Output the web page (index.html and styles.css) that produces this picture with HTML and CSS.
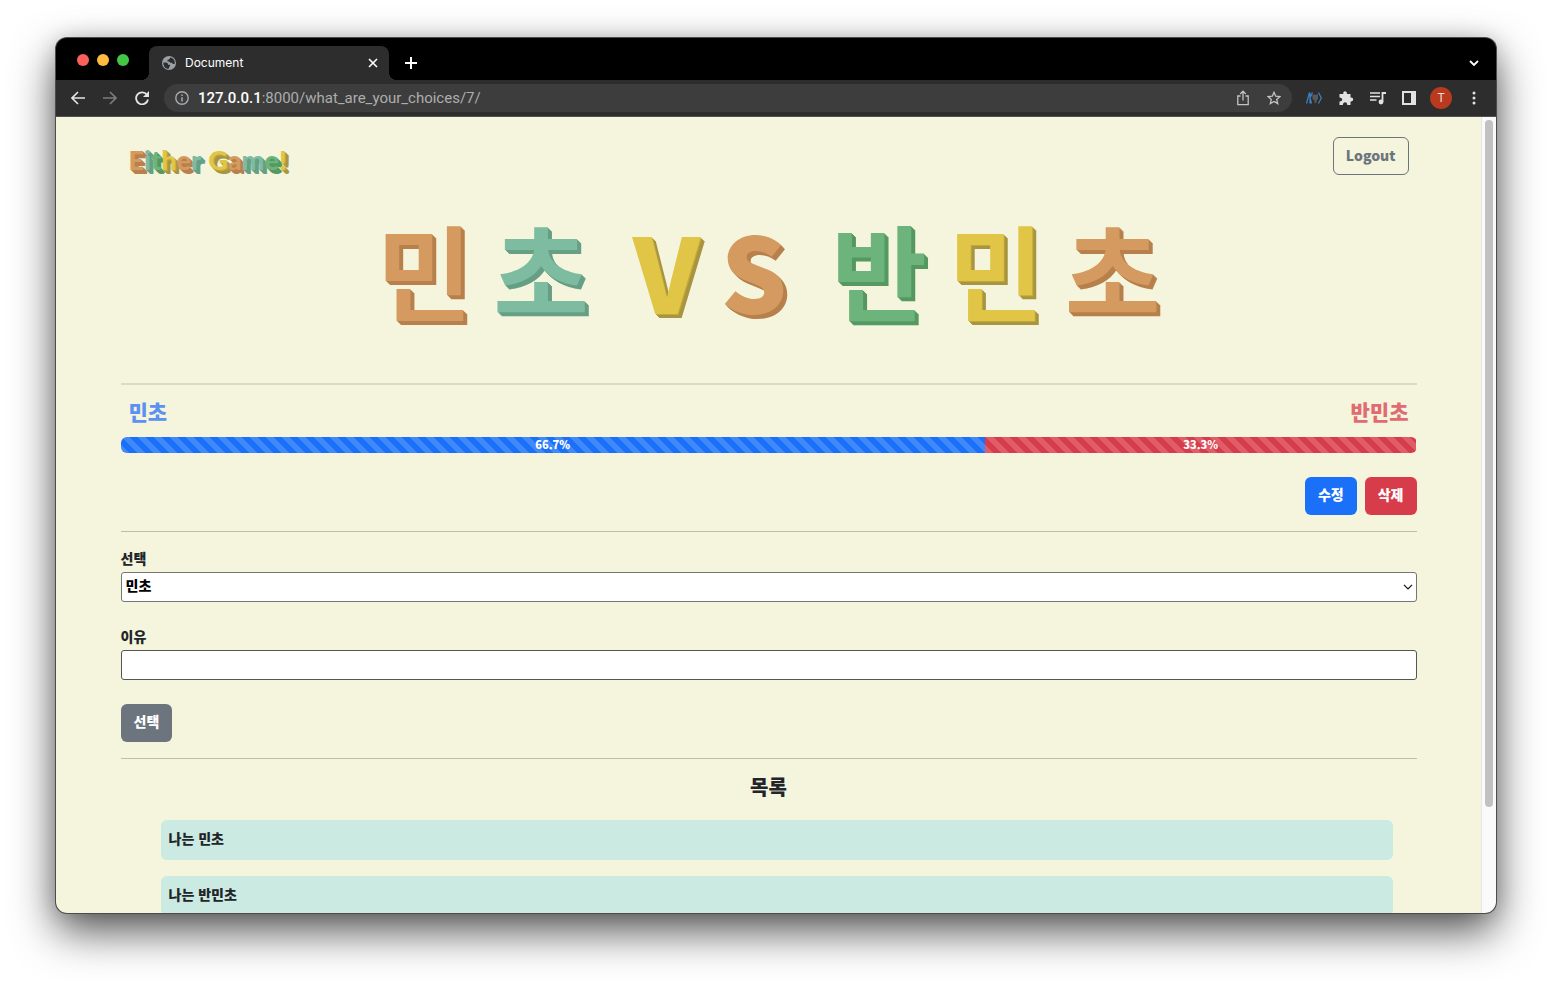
FILE: index.html
```html
<!DOCTYPE html>
<html lang="ko">
<head>
<meta charset="utf-8">
<title>Document</title>
<link rel="stylesheet" href="styles.css">
</head>
<body>
<div class="window">
  <header class="tabs">
    <div class="lights"><i class="red"></i><i class="amber"></i><i class="green"></i></div>
    <div class="tab">
      <svg class="globe" width="14" height="14" viewBox="0 0 14 14"><circle cx="7" cy="7" r="7" fill="#9aa0a6"/><path d="M1.4 6.400h3.200l1.400 1.300v1h2v1.600l-.9.8v1.500C3.700 13.200 1.100 10 1.400 6.400zM8.300 1.500C8.200 2.900 7 2.700 6.700 3.800H5.500v1.700h1.700l.8 1.200h2l.8 1.200h1.800c.7-3-1.100-5.800-4.300-6.400z" fill="#2d2d2d"/></svg>
      <span class="tab-title">Document</span>
      <button class="plain" aria-label="Close tab"><svg width="10" height="10" viewBox="0 0 10 10"><path d="M1 1l8 8M9 1L1 9" stroke="#fff" stroke-width="1.600"/></svg></button>
    </div>
    <button class="plain new" aria-label="New tab"><svg width="12" height="12" viewBox="0 0 12 12"><path d="M6 0v12M0 6h12" stroke="#fff" stroke-width="2"/></svg></button>
    <button class="plain more" aria-label="Search tabs"><svg width="10" height="8" viewBox="0 0 10 8"><path d="M1 2l4 4 4-4" fill="none" stroke="#fff" stroke-width="1.800"/></svg></button>
  </header>
  <div class="toolbar">
    <nav class="history">
      <button class="plain" aria-label="Back"><svg width="14" height="14" viewBox="0 0 14 14"><path d="M14 7H1.500M7 1L1 7l6 6" fill="none" stroke="#e4e4e4" stroke-width="1.600"/></svg></button>
      <button class="plain" aria-label="Forward"><svg width="14" height="14" viewBox="0 0 14 14"><path d="M0 7h12.500M7 1l6 6-6 6" fill="none" stroke="#7c7c7c" stroke-width="1.600"/></svg></button>
      <button class="plain" aria-label="Reload"><svg width="14" height="14" viewBox="0 0 14 14"><path d="M12 3.800A6 6 0 1 0 13 8.500" fill="none" stroke="#e4e4e4" stroke-width="1.800"/><path d="M14 0v6H8z" fill="#e4e4e4"/></svg></button>
    </nav>
    <div class="address">
      <svg width="14" height="14" viewBox="0 0 14 14"><circle cx="7" cy="7" r="6.200" fill="none" stroke="#a8acb0" stroke-width="1.400"/><path d="M7 6.200v4.200M7 3.500v1.500" stroke="#a8acb0" stroke-width="1.500"/></svg>
      <span class="url"><b>127.0.0.1</b>:8000/what_are_your_choices/7/</span>
      <button class="plain" aria-label="Share"><svg width="12" height="16" viewBox="0 0 12 16"><path d="M3.500 6H.8v8.700h10.400V6H8.500M6 10.500V1.500M3.200 4L6 1.200 8.800 4" fill="none" stroke="#c3c3c3" stroke-width="1.300"/></svg></button>
      <button class="plain" aria-label="Bookmark"><svg width="14" height="14" viewBox="0 0 14 14"><path d="M7 1.300l1.700 3.900 4.200.4-3.200 2.800 1 4.200L7 10.400l-3.700 2.200 1-4.200L1.100 5.600l4.200-.4z" fill="none" stroke="#c3c3c3" stroke-width="1.300"/></svg></button>
    </div>
    <div class="extensions">
      <svg width="16" height="12" viewBox="0 0 16 12"><path d="M3.500.5l-3 11M6.500.5L4 6l1.500 5.500M4 .5v11M12.500.5L15.300 6l-2.800 5.500" fill="none" stroke="#3c82c4" stroke-width="1.200"/><path d="M6.500 2l1.500.8h2.500L12 2v5l-1.500 1.500V11h-2V8.500L6.500 7z" fill="#5a5a5a"/></svg>
      <svg width="16" height="16" viewBox="0 0 16 16"><path d="M1.500 4h3.800C4.600.4 9.400.4 8.900 4h3.600v3.600c3.600-.5 3.600 4.300 0 3.800v3.600H9.200c.3-3.700-4.500-3.700-4.300 0H1.500v-3.500c3.600 0 3.600-4 0-4z" fill="#e2e2e2"/></svg>
      <svg width="16" height="14" viewBox="0 0 16 14"><path d="M0 2h10M0 5.500h10M0 9h6.500" stroke="#e2e2e2" stroke-width="1.700"/><path d="M12.500 11V2H16" fill="none" stroke="#e2e2e2" stroke-width="1.800"/><circle cx="11" cy="11" r="2.400" fill="#e2e2e2"/></svg>
      <svg width="14" height="14" viewBox="0 0 14 14"><path d="M0 0h14v14H0zM2 2v10h7V2z" fill="#e2e2e2" fill-rule="evenodd"/></svg>
      <span class="avatar">T</span>
      <svg width="4" height="14" viewBox="0 0 4 14"><circle cx="2" cy="2" r="1.500" fill="#e2e2e2"/><circle cx="2" cy="7" r="1.500" fill="#e2e2e2"/><circle cx="2" cy="12" r="1.500" fill="#e2e2e2"/></svg>
    </div>
  </div>
  <div class="viewport">
    <main class="page">
      <div class="container">
        <nav class="navbar">
          <a class="logo" href="#" aria-label="Either Game!"><span class="orange">E</span><span class="mint">i</span><span class="leaf">t</span><span class="gold">h</span><span class="orange">e</span><span class="mint">r</span><span class="gold word">G</span><span class="orange">a</span><span class="mint">m</span><span class="leaf">e</span><span class="gold">!</span></a>
          <button class="btn outline">Logout</button>
        </nav>
        <h1 class="title"><span class="orange">민</span><span class="mint">초</span><span class="gold latin word">V</span><span class="orange latin">S</span><span class="leaf word">반</span><span class="gold">민</span><span class="orange">초</span></h1>
        <hr class="thick">
        <div class="sides"><span class="side-a">민초</span><span class="side-b">반민초</span></div>
        <div class="progress"><div class="bar blue" style="width:66.7%">66.7%</div><div class="bar crimson" style="width:33.3%">33.3%</div></div>
        <div class="actions"><button class="btn blue">수정</button><button class="btn crimson">삭제</button></div>
        <hr>
        <form class="form">
          <label for="choice">선택</label>
          <div class="select-wrap">
            <select id="choice"><option>민초</option><option>반민초</option></select>
            <svg class="caret" width="10" height="6" viewBox="0 0 10 6"><path d="M1 .8l4 4 4-4" fill="none" stroke="#111" stroke-width="1.200"/></svg>
          </div>
          <label for="reason">이유</label>
          <input id="reason" type="text">
          <button class="btn gray" type="button">선택</button>
        </form>
        <hr>
        <h2>목록</h2>
        <ul class="list"><li>나는 민초</li><li>나는 반민초</li></ul>
      </div>
    </main>
    <div class="scrollbar"><div class="thumb"></div></div>
  </div>
</div>
</body>
</html>
```
FILE: styles.css
```css
* { box-sizing: border-box; }
body {
  margin: 0;
  height: 100vh;
  padding: 38px 56px 74px;
  background: #fff;
  overflow: hidden;
  font-family: "Noto Sans CJK KR", sans-serif;
  font-weight: 900;
  font-size: 14px;
  line-height: 24px;
  color: #212529;
}
button, input, select { font: inherit; }
svg { display: block; flex: none; }
.plain { border: 0; padding: 0; background: none; }

.window {
  height: 100%;
  display: flex;
  flex-direction: column;
  border-radius: 11px;
  overflow: hidden;
  background: #000;
  box-shadow: 0 0 0 1px #4c4c4c, 0 18px 44px rgba(0, 0, 0, .68), 0 0 20px rgba(0, 0, 0, .15);
}
.tabs {
  display: flex;
  height: 42px;
  padding-right: 17px;
  font: 12px/16px Inter, sans-serif;
  color: #fff;
}
.lights { display: flex; gap: 8px; width: 93px; padding: 16px 0 0 21px; }
.lights i { width: 12px; height: 12px; border-radius: 50%; }
.red { background: #fc605b; }
.amber { background: #fdbc40; }
.green { background: #43c645; }
.tab {
  position: relative;
  display: flex;
  align-items: center;
  gap: 9px;
  width: 240px;
  margin-top: 8px;
  padding: 0 11px 0 13px;
  border-radius: 8px 8px 0 0;
  background: #2d2d2d;
}
.tab::before, .tab::after {
  content: "";
  position: absolute;
  bottom: 0;
  width: 8px;
  height: 8px;
}
.tab::before { right: 100%; background: radial-gradient(circle at 0 0, #000 8px, #2d2d2d 8px); }
.tab::after { left: 100%; background: radial-gradient(circle at 100% 0, #000 8px, #2d2d2d 8px); }
.tab-title { flex: 1; }
.new { margin: 8px 0 0 16px; }
.more { margin: 8px 0 0 auto; }
.toolbar {
  display: flex;
  align-items: center;
  height: 37px;
  padding: 0 20px 0 15px;
  background: #2d2d2d;
  border-bottom: 1px solid #505050;
}
.history { display: flex; gap: 18px; width: 93px; }
.address {
  flex: 1;
  display: flex;
  align-items: center;
  gap: 18px;
  height: 28px;
  padding: 0 11px;
  border-radius: 14px;
  background: #3d3d3d;
  font: 15px/20px Roboto, sans-serif;
  color: #adadad;
}
.url { flex: 1; margin-left: -9px; }
.url b { font-weight: 500; color: #fff; }
.extensions { display: flex; align-items: center; gap: 16px; padding-left: 14px; }
.avatar {
  width: 22px;
  height: 22px;
  margin: 0 4px 0 -2px;
  border-radius: 50%;
  background: #b93a1e;
  color: #f3dcd6;
  font: 12px/22px Inter, sans-serif;
  text-align: center;
}

.viewport { flex: 1; min-height: 0; display: flex; }
.page { flex: 1; overflow: hidden; background: #f5f4dc; }
.scrollbar { width: 15px; padding: 3px; background: #fafafa; border-left: 1px solid #e6e6e6; }
.thumb { width: 8px; height: 87%; border-radius: 4px; background: #c1c1c1; }
.container { max-width: 1320px; margin: 0 auto; padding: 0 12px; }
.navbar { display: flex; justify-content: space-between; align-items: flex-start; padding: 20px 8px; }

.orange { --face: #d59a5f; --side: #b7804c; --edge: #b7804c; }
.mint { --face: #7ebca1; --side: #669f84; --edge: #669f84; }
.leaf { --face: #6db37c; --side: #559961; --edge: #559961; }
.gold { --face: #e0c546; --side: #a89540; --edge: #c2a83c; }
.logo {
  display: flex;
  padding-top: 8px;
  text-decoration: none;
  font: 900 27px/30px Lato, sans-serif;
}
.logo span {
  color: var(--face);
  text-shadow: 1px 1px var(--edge), 2px 2px var(--side), 3px 3px var(--side), 4px 4px var(--side);
}
.logo .word { margin-left: 7px; }
.title {
  display: flex;
  justify-content: center;
  gap: 21px;
  margin: 0 0 40px;
  font-size: 104px;
  font-weight: 700;
  line-height: 148px;
}
.title span {
  color: var(--face);
  text-shadow: 1px 1px var(--edge), 2px 2px var(--side), 3px 3px var(--side), 4px 4px var(--side);
}
.title .latin { font-weight: 900; }
.title .word { margin-left: 23px; }

.btn {
  height: 38px;
  padding: 0 13px 4px;
  border: 0;
  border-radius: 6px;
  color: #fff;
  line-height: 34px;
}
.outline { border: 1px solid #6c757d; padding: 0 12px 2px; background: none; color: #6c757d; }
.blue { background-color: #1a70f9; }
.crimson { background-color: #d73c4a; }
.gray { background-color: #6c757d; }
hr { width: 100%; height: 1px; margin: 16px 0; border: 0; background: #bdbdab; }
.thick { height: 2px; margin: 0; background: #dadac5; }
.sides {
  display: flex;
  justify-content: space-between;
  padding: 0 8px;
  font-size: 21px;
  line-height: 52px;
}
.side-a { color: #5b92f1; }
.side-b { color: #e06c73; }
.progress { display: flex; border-radius: 6px; overflow: hidden; }
.bar {
  padding-bottom: 2px;
  color: #fff;
  font-size: 11px;
  line-height: 14px;
  text-align: center;
  background-image: linear-gradient(45deg, rgba(255,255,255,.17) 25%, transparent 25%, transparent 50%, rgba(255,255,255,.17) 50%, rgba(255,255,255,.17) 75%, transparent 75%);
  background-size: 16px 16px;
}
.actions { display: flex; justify-content: flex-end; gap: 8px; margin-top: 24px; }
.form { display: flex; flex-direction: column; align-items: stretch; }
.form label { padding-bottom: 4px; line-height: 20px; }
.form .btn { align-self: flex-start; }
.select-wrap { position: relative; margin-bottom: 24px; }
select, input {
  display: block;
  width: 100%;
  height: 30px;
  padding: 0 4px 4px;
  border: 1px solid #767676;
  border-radius: 3px;
  background: #fff;
  color: #000;
}
select { appearance: none; }
input { margin-bottom: 24px; border-color: #555; }
.caret { position: absolute; right: 4px; top: 12px; pointer-events: none; }
h2 { margin: 0 0 21px; font-size: 20px; font-weight: 900; line-height: 24px; text-align: center; }
.list { margin: 0; padding: 0 24px 0 40px; list-style: none; }
.list li { margin-bottom: 16px; padding: 6px 8px 10px; border-radius: 6px; background: #cbeae1; }
```
